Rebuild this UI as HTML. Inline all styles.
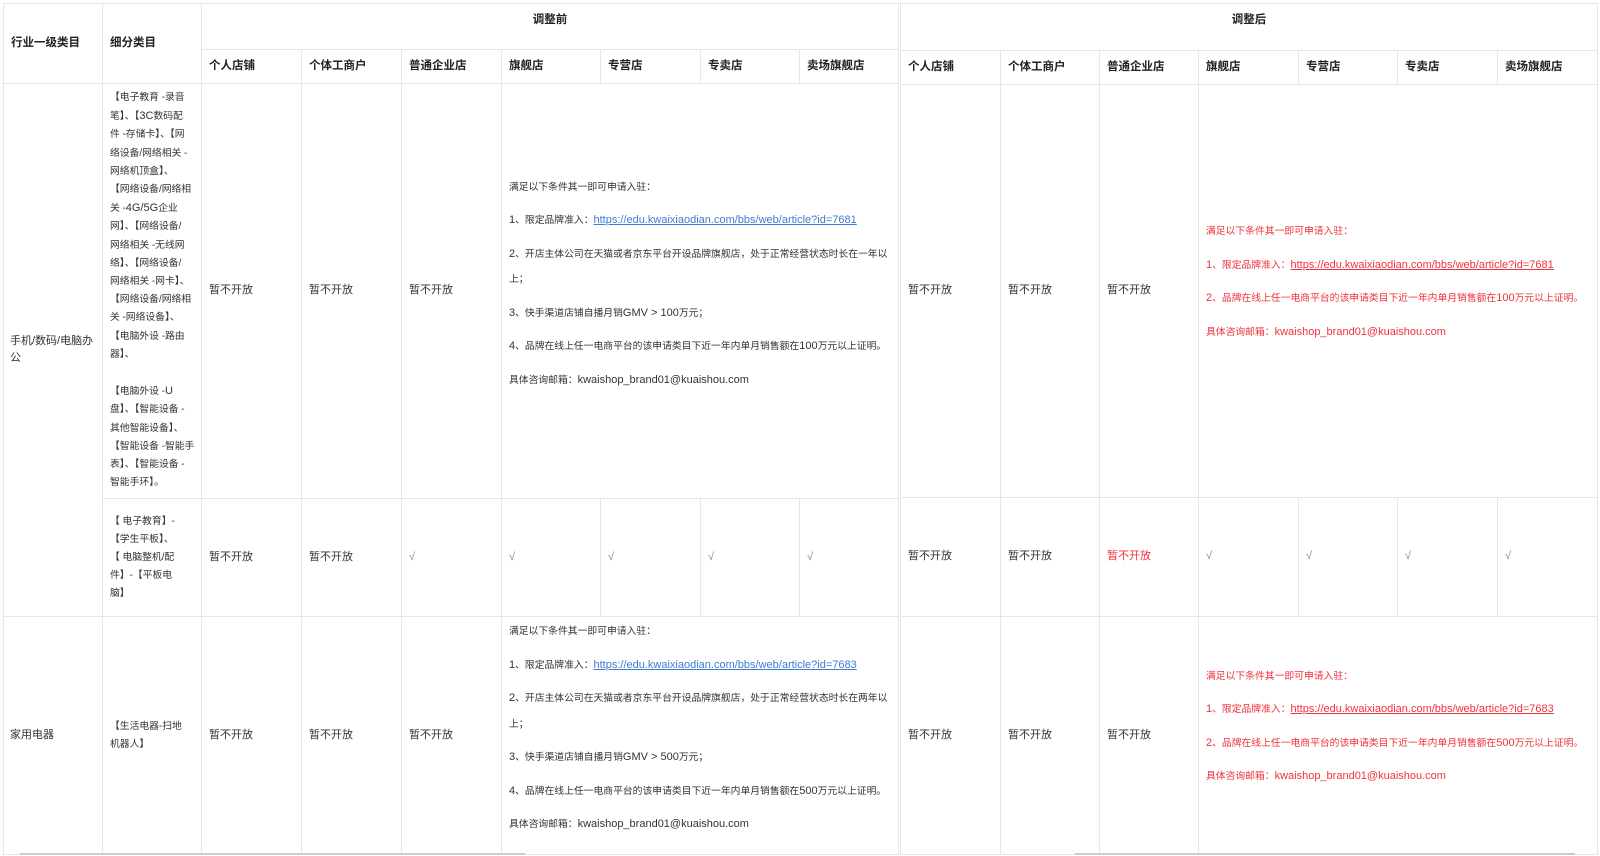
<!DOCTYPE html>
<html><head><meta charset="utf-8">
<style>
html,body{margin:0;padding:0;background:#fff;width:1600px;height:856px;overflow:hidden}
body{font-family:"Liberation Sans","Noto Sans CJK SC",sans-serif;font-size:11px;color:#333}
table{position:absolute;top:3px;border-collapse:collapse;table-layout:fixed;border-top:1px solid #cfcfcf}
td{border:1px solid #e6e6e6;padding:0 0 0 7px;vertical-align:middle;line-height:17.4px;overflow:hidden;white-space:nowrap}
.h{font-weight:bold;color:#222;font-size:11.5px}
.top{vertical-align:top;padding-top:8px;text-align:center}
.s{font-size:9.8px}
.l{font-size:11px}
p{margin:0 0 8px 0;line-height:25.5px}
p:last-child{margin-bottom:0}
a{color:#3d7bd1;text-decoration:underline}
.r{color:#f0323c}
.r a{color:#f0323c}
.ck{color:#888}
#L{left:3px;width:895px}
#R{left:900px;width:697px}
.sb{position:absolute;height:2px;background:#ccc;top:853px}
</style></head><body>
<table id="L">
<colgroup><col style="width:99px"><col style="width:99px"><col style="width:100px"><col style="width:100px"><col style="width:100px"><col style="width:99px"><col style="width:100px"><col style="width:99px"><col style="width:99px"></colgroup>
<tr style="height:46px"><td rowspan="2" class="h">行业一级类目</td><td rowspan="2" class="h">细分类目</td><td colspan="7" class="h top" style="padding-left:0">调整前</td></tr>
<tr style="height:34px"><td class="h">个人店铺</td><td class="h">个体工商户</td><td class="h">普通企业店</td><td class="h">旗舰店</td><td class="h">专营店</td><td class="h">专卖店</td><td class="h">卖场旗舰店</td></tr>
<tr style="height:415px"><td rowspan="2" style="padding-left:6px">手机/数码/电脑办<br>公</td>
<td class="s" style="vertical-align:top;padding-top:5px;line-height:18.2px">【电子教育 -录音<br>笔】、【<span class="l">3C</span>数码配<br>件 -存储卡】、【网<br>络设备/网络相关 -<br>网络机顶盒】、<br>【网络设备/网络相<br>关 -<span class="l">4G/5G</span>企业<br>网】、【网络设备/<br>网络相关 -无线网<br>络】、【网络设备/<br>网络相关 -网卡】、<br>【网络设备/网络相<br>关 -网络设备】、<br>【电脑外设 -路由<br>器】、<br><br>【电脑外设 -<span class="l">U</span><br>盘】、【智能设备 -<br>其他智能设备】、<br>【智能设备 -智能手<br>表】、【智能设备 -<br>智能手环】。</td>
<td>暂不开放</td><td>暂不开放</td><td>暂不开放</td>
<td colspan="4" class="s" style="padding-bottom:14px"><p>满足以下条件其一即可申请入驻：</p><p><span class="l">1</span>、限定品牌准入：<a class="l">https://edu.kwaixiaodian.com/bbs/web/article?id=7681</a></p><p><span class="l">2</span>、开店主体公司在天猫或者京东平台开设品牌旗舰店，处于正常经营状态时长在一年以<br>上；</p><p><span class="l">3</span>、快手渠道店铺自播月销<span class="l">GMV &gt; 100</span>万元；</p><p><span class="l">4</span>、品牌在线上任一电商平台的该申请类目下近一年内单月销售额在<span class="l">100</span>万元以上证明。</p><p>具体咨询邮箱：<span class="l">kwaishop_brand01@kuaishou.com</span></p></td></tr>
<tr style="height:118px"><td class="s" style="line-height:18px">【 电子教育】-<br>【学生平板】、<br>【 电脑整机/配<br>件】-【平板电<br>脑】</td><td>暂不开放</td><td>暂不开放</td><td class="ck">√</td><td class="ck">√</td><td class="ck">√</td><td class="ck">√</td><td class="ck">√</td></tr>
<tr style="height:238px"><td style="padding-left:6px">家用电器</td><td class="s" style="line-height:18px">【生活电器-扫地<br>机器人】</td><td>暂不开放</td><td>暂不开放</td><td>暂不开放</td>
<td colspan="4" class="s" style="padding-bottom:14px"><p>满足以下条件其一即可申请入驻：</p><p><span class="l">1</span>、限定品牌准入：<a class="l">https://edu.kwaixiaodian.com/bbs/web/article?id=7683</a></p><p><span class="l">2</span>、开店主体公司在天猫或者京东平台开设品牌旗舰店，处于正常经营状态时长在两年以<br>上；</p><p><span class="l">3</span>、快手渠道店铺自播月销<span class="l">GMV &gt; 500</span>万元；</p><p><span class="l">4</span>、品牌在线上任一电商平台的该申请类目下近一年内单月销售额在<span class="l">500</span>万元以上证明。</p><p>具体咨询邮箱：<span class="l">kwaishop_brand01@kuaishou.com</span></p></td></tr>
</table>
<table id="R">
<colgroup><col style="width:100px"><col style="width:99px"><col style="width:99px"><col style="width:100px"><col style="width:99px"><col style="width:100px"><col style="width:100px"></colgroup>
<tr style="height:47px"><td colspan="7" class="h top" style="padding-left:0">调整后</td></tr>
<tr style="height:34px"><td class="h">个人店铺</td><td class="h">个体工商户</td><td class="h">普通企业店</td><td class="h">旗舰店</td><td class="h">专营店</td><td class="h">专卖店</td><td class="h">卖场旗舰店</td></tr>
<tr style="height:413px"><td>暂不开放</td><td>暂不开放</td><td>暂不开放</td>
<td colspan="4" class="r s" style="padding-bottom:18px"><p>满足以下条件其一即可申请入驻：</p><p><span class="l">1</span>、限定品牌准入：<a class="l">https://edu.kwaixiaodian.com/bbs/web/article?id=7681</a></p><p><span class="l">2</span>、品牌在线上任一电商平台的该申请类目下近一年内单月销售额在<span class="l">100</span>万元以上证明。</p><p>具体咨询邮箱：<span class="l">kwaishop_brand01@kuaishou.com</span></p></td></tr>
<tr style="height:119px"><td>暂不开放</td><td>暂不开放</td><td class="r">暂不开放</td><td class="ck">√</td><td class="ck">√</td><td class="ck">√</td><td class="ck">√</td></tr>
<tr style="height:238px"><td>暂不开放</td><td>暂不开放</td><td>暂不开放</td>
<td colspan="4" class="r s" style="padding-bottom:18px"><p>满足以下条件其一即可申请入驻：</p><p><span class="l">1</span>、限定品牌准入：<a class="l">https://edu.kwaixiaodian.com/bbs/web/article?id=7683</a></p><p><span class="l">2</span>、品牌在线上任一电商平台的该申请类目下近一年内单月销售额在<span class="l">500</span>万元以上证明。</p><p>具体咨询邮箱：<span class="l">kwaishop_brand01@kuaishou.com</span></p></td></tr>
</table>
<div class="sb" style="left:20px;width:505px"></div>
<div class="sb" style="left:1075px;width:500px"></div>
</body></html>
